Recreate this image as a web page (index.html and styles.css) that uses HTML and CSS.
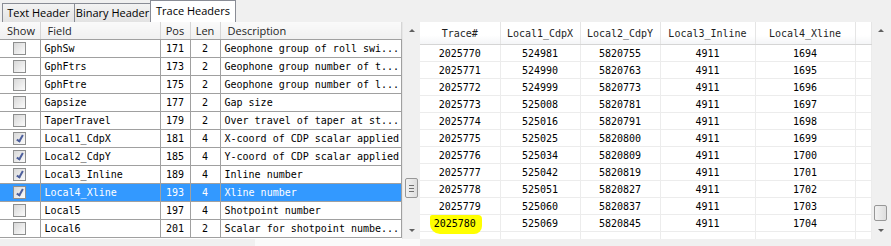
FILE: index.html
```html
<!DOCTYPE html>
<html lang="en">
<head>
    <meta charset="UTF-8">
    <title>Trace Headers</title>
    <link rel="stylesheet" href="styles.css">
</head>
<body>
    <div class="window">
        <div class="tabs">
            <div class="tab first">Text Header</div>
            <div class="tab second">Binary Header</div>
            <div class="tab active">Trace Headers</div>
        </div>
        <div class="panes">
            <div class="left-pane">
                <div class="grid-wrap">
                    <table class="fields">
                        <colgroup>
                            <col class="c-show"><col class="c-field"><col class="c-pos"><col class="c-len"><col>
                        </colgroup>
                        <thead>
                            <tr><th>Show</th><th>Field</th><th class="mid">Pos</th><th class="mid">Len</th><th>Description</th></tr>
                        </thead>
                        <tbody>
                            <tr><td><span class="cb"></span></td><td>GphSw</td><td class="mid">171</td><td class="mid">2</td><td>Geophone group of roll swi...</td></tr>
                            <tr><td><span class="cb"></span></td><td>GphFtrs</td><td class="mid">173</td><td class="mid">2</td><td>Geophone group number of t...</td></tr>
                            <tr><td><span class="cb"></span></td><td>GphFtre</td><td class="mid">175</td><td class="mid">2</td><td>Geophone group number of l...</td></tr>
                            <tr><td><span class="cb"></span></td><td>Gapsize</td><td class="mid">177</td><td class="mid">2</td><td>Gap size</td></tr>
                            <tr><td><span class="cb"></span></td><td>TaperTravel</td><td class="mid">179</td><td class="mid">2</td><td>Over travel of taper at st...</td></tr>
                            <tr><td><span class="cb checked"></span></td><td>Local1_CdpX</td><td class="mid">181</td><td class="mid">4</td><td>X-coord of CDP scalar applied</td></tr>
                            <tr><td><span class="cb checked"></span></td><td>Local2_CdpY</td><td class="mid">185</td><td class="mid">4</td><td>Y-coord of CDP scalar applied</td></tr>
                            <tr><td><span class="cb checked"></span></td><td>Local3_Inline</td><td class="mid">189</td><td class="mid">4</td><td>Inline number</td></tr>
                            <tr class="selected"><td><span class="cb checked"></span></td><td>Local4_Xline</td><td class="mid">193</td><td class="mid">4</td><td>Xline number</td></tr>
                            <tr><td><span class="cb"></span></td><td>Local5</td><td class="mid">197</td><td class="mid">4</td><td>Shotpoint number</td></tr>
                            <tr><td><span class="cb"></span></td><td>Local6</td><td class="mid">201</td><td class="mid">2</td><td>Scalar for shotpoint numbe...</td></tr>
                        </tbody>
                    </table>
                </div>
                <div class="vscroll">
                    <span class="arrow up"></span>
                    <div class="track">
                        <div class="thumb grip left-thumb"><span></span></div>
                    </div>
                    <span class="arrow down"></span>
                </div>
            </div>
            <div class="right-pane">
                <div class="grid-wrap">
                    <table class="traces">
                        <colgroup>
                            <col class="t1"><col class="t2"><col class="t3"><col class="t4"><col class="t5"><col>
                        </colgroup>
                        <thead>
                            <tr><th>Trace#</th><th>Local1_CdpX</th><th>Local2_CdpY</th><th>Local3_Inline</th><th>Local4_Xline</th><th></th></tr>
                        </thead>
                        <tbody>
                            <tr><td>2025770</td><td>524981</td><td>5820755</td><td>4911</td><td>1694</td><td></td></tr>
                            <tr><td>2025771</td><td>524990</td><td>5820763</td><td>4911</td><td>1695</td><td></td></tr>
                            <tr><td>2025772</td><td>524999</td><td>5820773</td><td>4911</td><td>1696</td><td></td></tr>
                            <tr><td>2025773</td><td>525008</td><td>5820781</td><td>4911</td><td>1697</td><td></td></tr>
                            <tr><td>2025774</td><td>525016</td><td>5820791</td><td>4911</td><td>1698</td><td></td></tr>
                            <tr><td>2025775</td><td>525025</td><td>5820800</td><td>4911</td><td>1699</td><td></td></tr>
                            <tr><td>2025776</td><td>525034</td><td>5820809</td><td>4911</td><td>1700</td><td></td></tr>
                            <tr><td>2025777</td><td>525042</td><td>5820819</td><td>4911</td><td>1701</td><td></td></tr>
                            <tr><td>2025778</td><td>525051</td><td>5820827</td><td>4911</td><td>1702</td><td></td></tr>
                            <tr><td>2025779</td><td>525060</td><td>5820837</td><td>4911</td><td>1703</td><td></td></tr>
                            <tr><td><span class="marker">2025780</span></td><td>525069</td><td>5820845</td><td>4911</td><td>1704</td><td></td></tr>
                            <tr><td></td><td></td><td></td><td></td><td></td><td></td></tr>
                        </tbody>
                    </table>
                </div>
                <div class="vscroll">
                    <span class="arrow up"></span>
                    <div class="track">
                        <div class="thumb right-thumb"></div>
                    </div>
                    <span class="arrow down"></span>
                </div>
            </div>
        </div>
        <div class="footer">
            <div class="footer-box"></div>
        </div>
    </div>
</body>
</html>
```
FILE: styles.css
```css
body {
    margin: 0;
    background-color: #f0f0f0;
    font-family: "Open Sans", "Noto Sans", sans-serif;
    overflow: hidden;
}
.window {
    width: 891px;
    height: 246px;
    background-color: #f0f0f0;
}
.tabs {
    display: flex;
    align-items: flex-end;
    height: 22px;
}
.tab {
    height: 19px;
    line-height: 18px;
    font-size: 11px;
    text-align: center;
    white-space: nowrap;
    color: #000;
    background: linear-gradient(#f3f3f3, #e3e3e3);
    border: 1px solid #898c95;
    border-bottom: none;
    box-sizing: border-box;
    margin-left: -1px;
}
.tab.first {
    margin-left: 2px;
    width: 73px;
}
.tab.second {
    width: 77px;
}
.tab.active {
    height: 22px;
    line-height: 20px;
    width: 86px;
    background: #fff;
}
.panes {
    display: flex;
    height: 217px;
}
.left-pane {
    display: flex;
    width: 420px;
    background-color: #fff;
}
.grid-wrap {
    flex: 1;
    overflow: hidden;
}
table {
    border-collapse: collapse;
    table-layout: fixed;
    font-family: "DejaVu Sans Mono", monospace;
    font-size: 10px;
}
.fields {
    width: 402px;
}
.c-show { width: 40px; }
.c-field { width: 120px; }
.c-pos { width: 30px; }
.c-len { width: 30px; }
.fields th {
    height: 17px;
    line-height: 16px;
    font-family: "Open Sans", "Noto Sans", sans-serif;
    font-size: 11px;
    font-weight: normal;
    text-align: left;
    padding: 0 0 0 7px;
    color: #1e1e1e;
    background: linear-gradient(#fafafa, #f0f0f0);
    border-right: 1px solid #d5d5d5;
    border-bottom: 1px solid #a0a0a0;
    white-space: nowrap;
}
.fields th.mid {
    text-align: center;
    padding: 0;
}
.fields td {
    height: 17px;
    line-height: 14px;
    padding: 0 0 0 4px;
    border: 1px solid #a0a0a0;
    white-space: nowrap;
    overflow: hidden;
    color: #000;
}
.fields td:first-child {
    border-left: none;
    text-align: center;
    padding: 0;
}
.fields td.mid {
    text-align: center;
    padding: 0;
}
.fields tr.selected td {
    background-color: #3399ff;
    color: #fff;
}
.cb {
    display: inline-block;
    width: 11px;
    height: 11px;
    border: 1px solid #8e8f8f;
    background: linear-gradient(135deg, #d8d8d8, #fbfbfb);
    vertical-align: middle;
    position: relative;
}
.cb.checked::after {
    content: "";
    position: absolute;
    left: 4px;
    top: 1px;
    width: 2px;
    height: 6px;
    border: solid #4d5f9c;
    border-width: 0 2px 2px 0;
    transform: rotate(30deg);
}
.vscroll {
    width: 17px;
    display: flex;
    flex-direction: column;
    background-color: #f0f0f0;
    border-left: 1px solid #e6e6e6;
}
.arrow {
    height: 17px;
    display: flex;
    align-items: center;
    justify-content: center;
}
.arrow::before {
    content: "";
    border-left: 3px solid transparent;
    border-right: 3px solid transparent;
}
.arrow.up::before {
    border-bottom: 3px solid #606060;
}
.arrow.down::before {
    border-top: 3px solid #606060;
}
.track {
    flex: 1;
    display: flex;
    flex-direction: column;
}
.thumb {
    margin-left: 2px;
    width: 13px;
    border: 1px solid #979797;
    border-radius: 2px;
    box-sizing: border-box;
    background: linear-gradient(90deg, #f2f2f2, #dedede);
    display: flex;
    align-items: center;
    justify-content: center;
}
.left-thumb {
    margin-top: 139px;
    height: 20px;
}
.grip span {
    width: 5px;
    height: 5px;
    border-top: 1px solid #707070;
    border-bottom: 1px solid #707070;
    position: relative;
}
.grip span::after {
    content: "";
    position: absolute;
    left: 0;
    right: 0;
    top: 2px;
    border-top: 1px solid #707070;
}
.right-thumb {
    margin-top: 166px;
    height: 16px;
}
.right-pane {
    display: flex;
    width: 471px;
    background-color: #f0f0f0;
}
.right-pane .grid-wrap {
    flex: none;
    width: 452px;
    background-color: #fff;
}
.right-pane .vscroll {
    border-left: none;
    margin-right: 2px;
}
.traces {
    width: 452px;
}
.t1 { width: 80px; }
.t2 { width: 80px; }
.t3 { width: 80px; }
.t4 { width: 95px; }
.t5 { width: 100px; }
.traces th {
    height: 20px;
    font-weight: normal;
    color: #1e1e1e;
    background: linear-gradient(#ffffff 60%, #f4f5f7);
    border-right: 1px solid #e5e5e5;
    border-bottom: 1px solid #d5d5d5;
}
.traces td {
    height: 16px;
    padding: 0;
    text-align: center;
    color: #000;
    border-right: 1px solid #ececec;
    border-bottom: 1px solid #ececec;
}
.marker {
    background-color: #ffff00;
    padding: 3px 6px 5px 4px;
    margin-left: -8px;
    border-radius: 2px 4px 8px 10px;
}
.footer {
    display: flex;
    height: 7px;
}
.footer-box {
    margin-left: 255px;
    width: 165px;
    background-color: #fafafa;
}
```
